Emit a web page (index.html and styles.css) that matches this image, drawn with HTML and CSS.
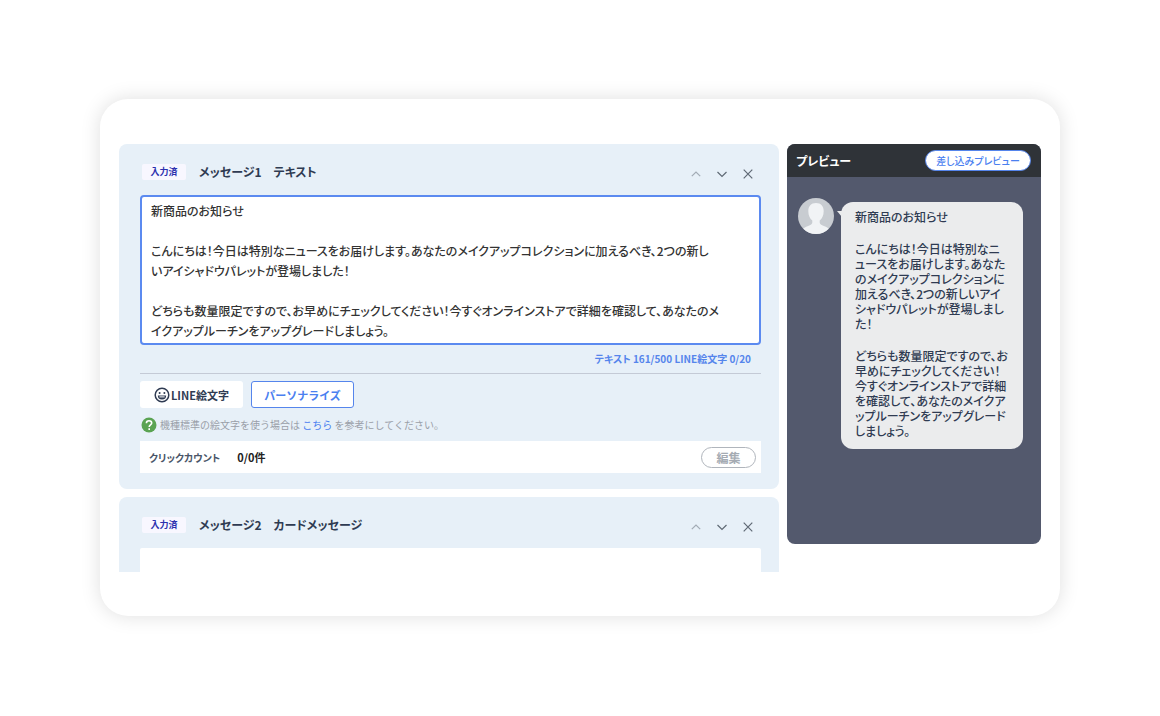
FILE: index.html
```
<!DOCTYPE html>
<html lang="ja">
<head>
    <meta charset="UTF-8">
    <meta name="viewport" content="width=device-width, initial-scale=1.0">
    <title>メッセージ作成</title>
    <link rel="stylesheet" href="styles.css">
</head>
<body>
    <main class="window">
        <div class="messages">
            <section class="message">
                <header class="message-header">
                    <span class="badge">入力済</span>
                    <h2>メッセージ1　テキスト</h2>
                    <div class="message-actions">
                        <button type="button" aria-label="上へ" disabled>
                            <svg viewBox="0 0 12 12"><path d="M1.8 8.2 6 4l4.2 4.2"/></svg>
                        </button>
                        <button type="button" aria-label="下へ">
                            <svg viewBox="0 0 12 12"><path d="M1.5 4 6 8.5 10.5 4"/></svg>
                        </button>
                        <button type="button" aria-label="削除">
                            <svg viewBox="0 0 12 12"><path d="M1.7 1.7l8.6 8.6M10.3 1.7l-8.6 8.6"/></svg>
                        </button>
                    </div>
                </header>

                <textarea class="message-text" id="messageText" aria-label="メッセージ1">新商品のお知らせ

こんにちは！今日は特別なニュースをお届けします。あなたのメイクアップコレクションに加えるべき、2つの新し
いアイシャドウパレットが登場しました！

どちらも数量限定ですので、お早めにチェックしてください！今すぐオンラインストアで詳細を確認して、あなたのメ
イクアップルーチンをアップグレードしましょう。</textarea>
                <div class="counter">テキスト 161/500 LINE絵文字 0/20</div>

                <div class="tools">
                    <button type="button" class="btn">
                        <svg viewBox="0 0 16 16" class="icon-smile">
                            <circle cx="8" cy="8" r="6.8"/>
                            <path class="solid" d="M3.8 8.6h8.4a4.200 4 0 0 1-8.400 0z"/>
                            <path class="teeth" d="M5.400 9.900h5.200"/>
                            <circle class="solid" cx="5.600" cy="5.900" r="1"/>
                            <circle class="solid" cx="10.400" cy="5.900" r="1"/>
                        </svg>LINE絵文字
                    </button>
                    <button type="button" class="btn btn-outline">パーソナライズ</button>
                </div>

                <p class="help">
                    <svg viewBox="0 0 16 16" class="icon-help">
                        <circle cx="8" cy="8" r="7.5"/>
                        <path d="M5.4 6.2C5.400 4.600 6.500 3.700 8 3.700s2.700.900 2.700 2.300c0 1.800-2.500 1.900-2.500 3.900"/>
                        <path d="M8.200 11.300v1.700"/>
                    </svg>
                    <span>機種標準の絵文字を使う場合は <a href="#">こちら</a> を参考にしてください。</span>
                </p>

                <div class="click-count">
                    <span class="click-label">クリックカウント</span>
                    <span class="click-value">0/0件</span>
                    <button type="button" class="edit-btn">編集</button>
                </div>
            </section>

            <section class="message message-next">
                <header class="message-header">
                    <span class="badge">入力済</span>
                    <h2>メッセージ2　カードメッセージ</h2>
                    <div class="message-actions">
                        <button type="button" aria-label="上へ" disabled>
                            <svg viewBox="0 0 12 12"><path d="M1.8 8.2 6 4l4.2 4.2"/></svg>
                        </button>
                        <button type="button" aria-label="下へ">
                            <svg viewBox="0 0 12 12"><path d="M1.5 4 6 8.5 10.5 4"/></svg>
                        </button>
                        <button type="button" aria-label="削除">
                            <svg viewBox="0 0 12 12"><path d="M1.7 1.7l8.6 8.6M10.3 1.7l-8.6 8.6"/></svg>
                        </button>
                    </div>
                </header>
                <div class="card-body"></div>
            </section>
        </div>

        <aside class="preview">
            <header class="preview-header">
                <h2>プレビュー</h2>
                <button type="button" class="preview-btn">差し込みプレビュー</button>
            </header>
            <div class="talk">
                <svg viewBox="0 0 36 36" class="avatar">
                    <clipPath id="avatarClip"><circle cx="18" cy="18" r="18"/></clipPath>
                    <g clip-path="url(#avatarClip)">
                        <rect width="36" height="36" fill="#c8ccd1"/>
                        <path fill="#f1f3f5" d="M18 5c5 0 7.700 3.300 7.700 8 0 4.500-1.700 7.800-4 9.500v2c0 1.600 1.600 2.300 4.200 3.400 2.600 1 5.100 2.400 6.100 4.600V36H4v-3.500c1-2.200 3.500-3.600 6.100-4.600 2.600-1.100 4.200-1.800 4.200-3.400v-2c-2.300-1.700-4-5-4-9.500 0-4.700 2.700-8 7.700-8z"/>
                    </g>
                </svg>
                <div class="bubble">
                    <p>新商品のお知らせ</p>
                    <p>こんにちは！今日は特別なニ<br>ュースをお届けします。あなた<br>のメイクアップコレクションに<br>加えるべき、2つの新しいアイ<br>シャドウパレットが登場しまし<br>た！</p>
                    <p>どちらも数量限定ですので、お<br>早めにチェックしてください！<br>今すぐオンラインストアで詳細<br>を確認して、あなたのメイクア<br>ップルーチンをアップグレード<br>しましょう。</p>
                </div>
            </div>
        </aside>
    </main>
</body>
</html>
```
FILE: styles.css
```
* {
    box-sizing: border-box;
}

body {
    margin: 0;
    padding: 99px 100px;
    background: #fff;
    color: #2f3b52;
    font-family: "Noto Sans CJK JP", sans-serif;
    font-size: 12px;
    font-weight: 500;
}

h2,
p {
    margin: 0;
}

button,
textarea {
    font-family: inherit;
}

button {
    padding: 0;
    border: none;
    background: none;
    cursor: pointer;
}

a {
    color: #4a80f0;
    text-decoration: none;
}

.window {
    display: flex;
    align-items: flex-start;
    gap: 8px;
    padding: 45px 19px 44px;
    background: #fff;
    border-radius: 28px;
    box-shadow: 0 0 20px rgba(0, 0, 0, 0.13);
}

.messages {
    flex: 1;
    min-width: 0;
    display: flex;
    flex-direction: column;
    gap: 8px;
}

/* メッセージ */
.message {
    padding: 0 18px 16px 21px;
    background: #e7f0f8;
    border-radius: 8px;
}

.message-next {
    padding-bottom: 0;
    border-radius: 8px 8px 0 0;
}

.message-header {
    display: flex;
    align-items: center;
    height: 51px;
    padding: 5px 7px 0 2px;
}

.message-header h2 {
    margin-left: 13px;
    font-size: 12px;
    font-weight: 700;
    line-height: 20px;
    font-feature-settings: "palt";
}

.badge {
    width: 44px;
    border-radius: 2px;
    background: #f8f7ff;
    color: #2b2fae;
    font-size: 9px;
    font-weight: 700;
    line-height: 16px;
    text-align: center;
}

.message-actions {
    display: flex;
    gap: 14px;
    margin-top: 4px;
    margin-left: auto;
}

.message-actions button {
    width: 12px;
    height: 12px;
}

.message-actions button:disabled {
    opacity: 0.5;
}

.message-actions svg {
    display: block;
    fill: none;
    stroke: #5f6975;
    stroke-width: 1.2;
}

.message-text {
    display: block;
    width: 100%;
    height: 150px;
    padding: 4px 8px 4px 9px;
    border: 2px solid #5b8af0;
    border-radius: 4px;
    background: #fff;
    color: #333;
    font-size: 12px;
    font-weight: 500;
    line-height: 20px;
    font-feature-settings: "palt";
    resize: none;
    outline: none;
    overflow: hidden;
}

.counter {
    padding-right: 10px;
    border-bottom: 1px solid #c4cad6;
    color: #5585ec;
    font-size: 10px;
    font-weight: 700;
    line-height: 28px;
    text-align: right;
    font-feature-settings: "palt";
}

.tools {
    display: flex;
    gap: 8px;
    padding-top: 7px;
}

.btn {
    display: flex;
    align-items: center;
    justify-content: center;
    gap: 1px;
    width: 103px;
    height: 27px;
    border-radius: 3px;
    background: #fff;
    color: #2f3b52;
    font-size: 11px;
    font-weight: 700;
}

.btn-outline {
    border: 1px solid #5585ec;
    color: #4a80f0;
}

.icon-smile {
    width: 16px;
    height: 16px;
    fill: none;
    stroke: #2f3b52;
    stroke-width: 1.5;
}

.icon-smile .solid {
    fill: #2f3b52;
    stroke: none;
}

.icon-smile .teeth {
    stroke: #fff;
    stroke-width: 1;
}

.help {
    display: flex;
    align-items: center;
    gap: 3px;
    height: 33px;
    padding-left: 1px;
    color: #9a9fa8;
    font-size: 10px;
    font-weight: 400;
}

.icon-help {
    width: 16px;
    height: 16px;
    fill: #5aa352;
}

.icon-help path {
    fill: none;
    stroke: #fff;
    stroke-width: 1.6;
}

.click-count {
    display: flex;
    align-items: center;
    height: 32px;
    padding: 0 5px 0 9px;
    background: #fff;
    font-size: 10px;
    font-weight: 700;
}

.click-label {
    color: #4a5568;
    font-feature-settings: "palt";
}

.click-value {
    margin-left: 17px;
    color: #222;
    font-size: 11px;
}

.edit-btn {
    width: 55px;
    height: 21px;
    margin-left: auto;
    border: 1px solid #b0b5bc;
    border-radius: 11px;
    color: #a5abb3;
    font-size: 12px;
    font-weight: 700;
    line-height: 19px;
}

.card-body {
    height: 24px;
    border-radius: 2px 2px 0 0;
    background: #fff;
}

/* プレビュー */
.preview {
    width: 254px;
    min-height: 400px;
    border-radius: 8px;
    background: #53596d;
    overflow: hidden;
}

.preview-header {
    display: flex;
    align-items: center;
    justify-content: space-between;
    height: 33px;
    padding: 0 10px 0 9px;
    background: #2f3338;
}

.preview-header h2 {
    color: #fff;
    font-size: 12px;
    font-weight: 700;
    font-feature-settings: "palt";
}

.preview-btn {
    width: 106px;
    height: 21px;
    border: 1px solid #5585ec;
    border-radius: 11px;
    background: #fff;
    color: #4a80f0;
    font-size: 10px;
    font-weight: 500;
    line-height: 19px;
    font-feature-settings: "palt";
}

.talk {
    display: flex;
    align-items: flex-start;
    gap: 7px;
    padding: 21px 18px 0 11px;
}

.avatar {
    flex: none;
    width: 36px;
    height: 36px;
}

.bubble {
    position: relative;
    flex: 1;
    display: flex;
    flex-direction: column;
    gap: 17px;
    margin-top: 4px;
    padding: 7px 12px 11px 14px;
    border-radius: 12px;
    background: #ebeced;
    color: #2f3b52;
    font-size: 12px;
    line-height: 15px;
    white-space: nowrap;
    font-feature-settings: "palt";
}

.bubble::before {
    content: "";
    position: absolute;
    top: 9px;
    left: -4px;
    border-top: 6px solid #ebeced;
    border-left: 5px solid transparent;
}
```
